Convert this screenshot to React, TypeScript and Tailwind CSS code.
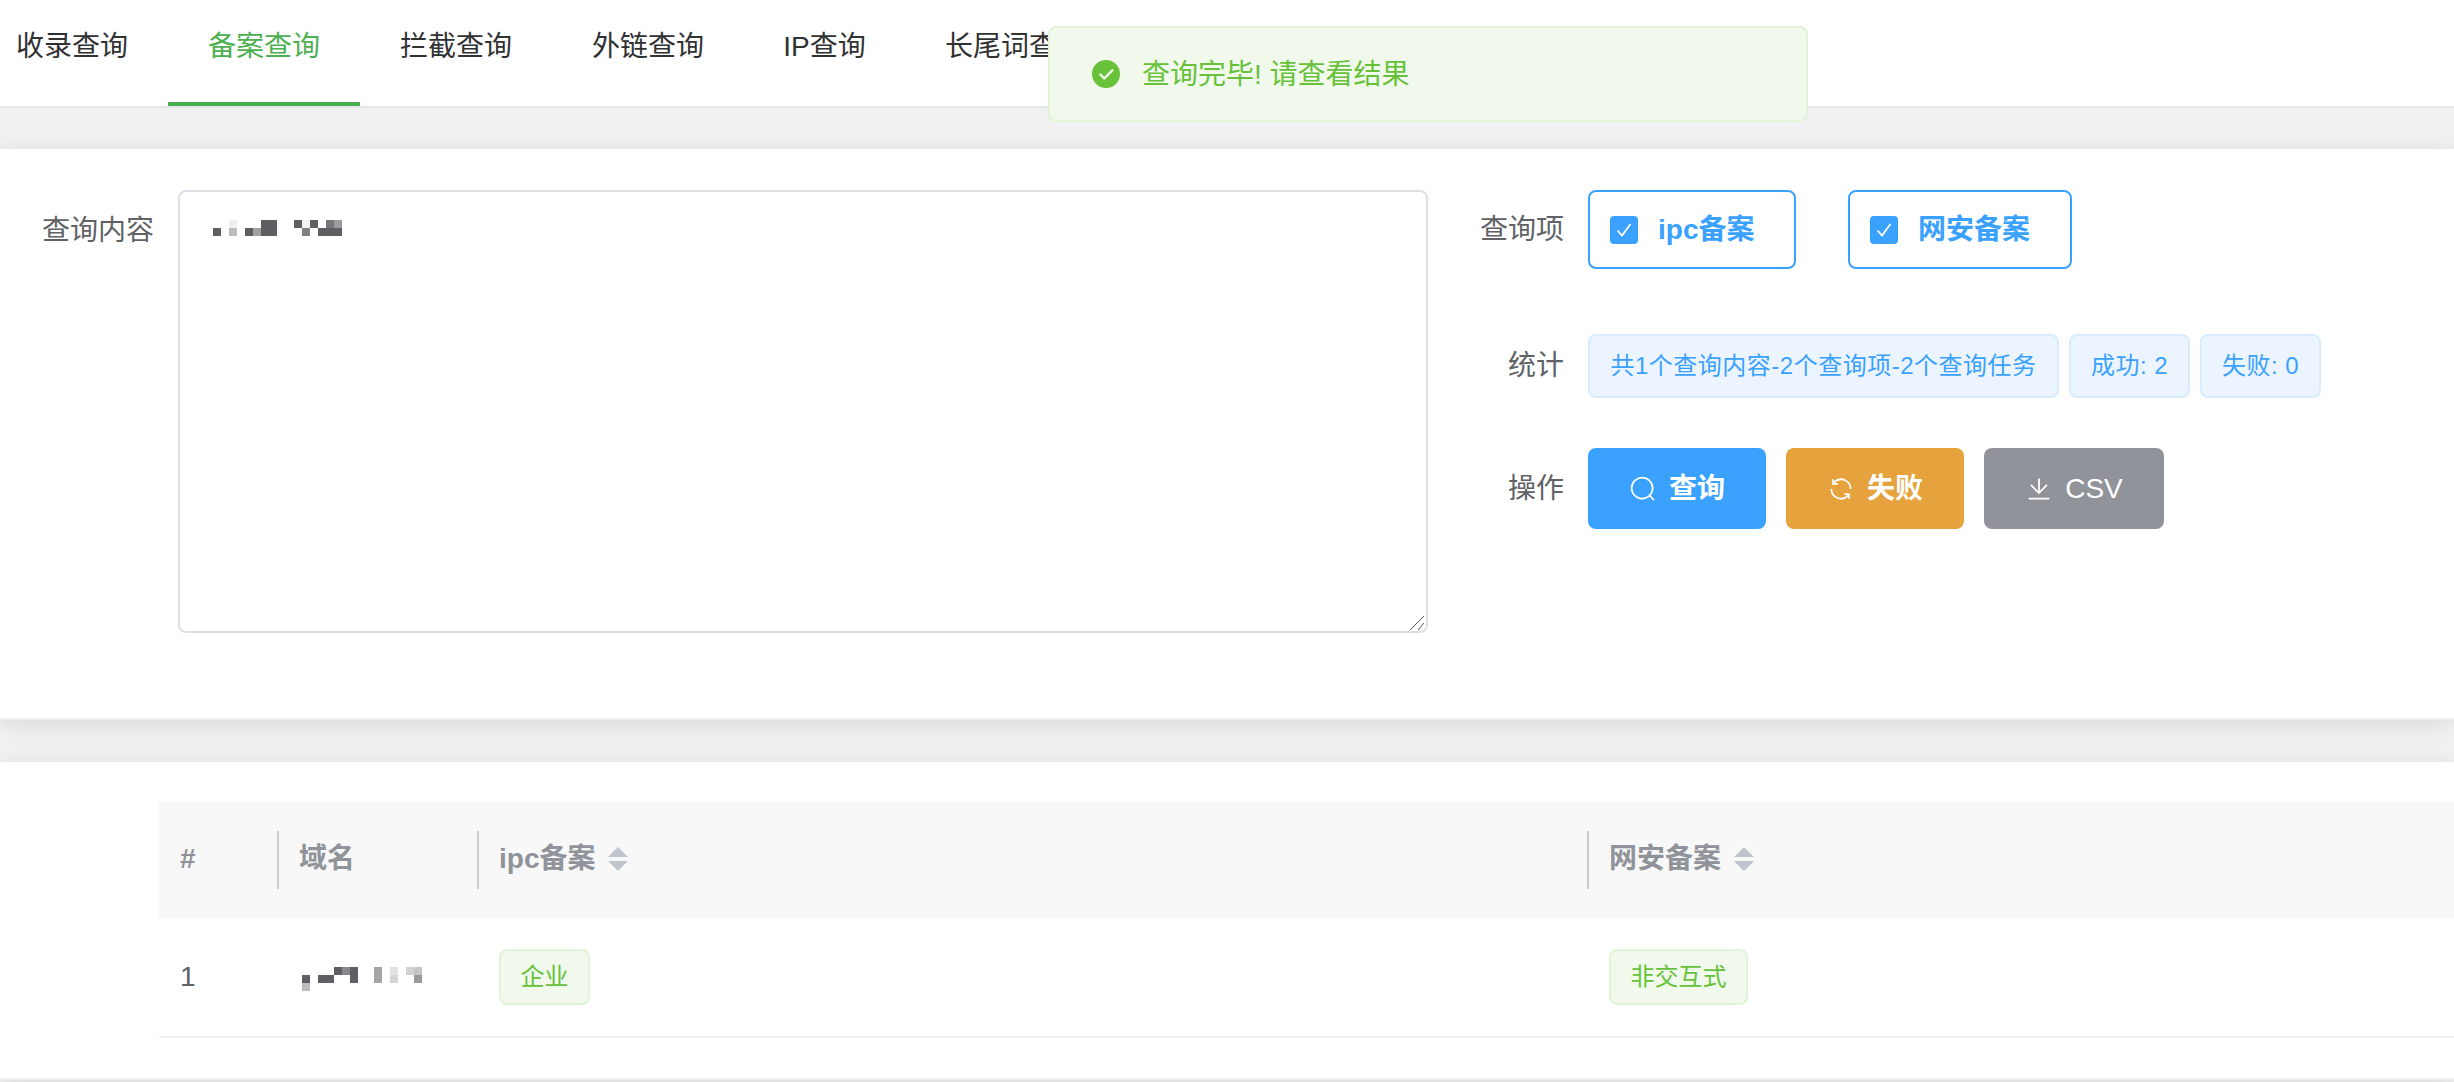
import { useState } from 'react';

const font = { fontFamily: '"Liberation Sans", "Noto Sans CJK SC", sans-serif' };

const tabs = [
  { label: '收录查询', width: 'w-[192px]' },
  { label: '备案查询', width: 'w-[192px]', active: true },
  { label: '拦截查询', width: 'w-[192px]' },
  { label: '外链查询', width: 'w-[192px]' },
  { label: 'IP查询', width: 'w-[161px]' },
  { label: '长尾词查询', width: 'w-[220px]' },
];

// blurred-out text in the reference
const queryMosaic: [number, number, number, number, string][] = [
  [0, 8, 8, 8, '#5f5f63'],
  [16, 0, 8, 8, '#f0f0f0'],
  [16, 8, 8, 8, '#bdbdbd'],
  [32, 8, 8, 8, '#5f5f63'],
  [40, 8, 8, 8, '#a0a0a0'],
  [48, 0, 16, 16, '#5f5f63'],
  [81, 0, 8, 8, '#5f5f63'],
  [89, 0, 8, 8, '#f2f2f2'],
  [89, 8, 8, 8, '#808083'],
  [97, 0, 8, 8, '#5f5f63'],
  [105, 8, 24, 8, '#5f5f63'],
  [113, 0, 8, 8, '#77777a'],
  [121, 0, 8, 8, '#9b9b9d'],
];

const domainMosaic: [number, number, number, number, string][] = [
  [0, 8, 8, 8, '#5f5f63'],
  [0, 16, 8, 8, '#bbbbbb'],
  [16, 8, 16, 8, '#5f5f63'],
  [32, 0, 8, 8, '#5f5f63'],
  [40, 0, 8, 8, '#88888b'],
  [48, 0, 8, 16, '#5f5f63'],
  [72, 0, 8, 16, '#a5a5a7'],
  [88, 0, 8, 8, '#e3e3e3'],
  [88, 8, 8, 8, '#d5d5d5'],
  [104, 0, 8, 8, '#d2d2d2'],
  [112, 0, 8, 8, '#c5c5c7'],
  [112, 8, 8, 8, '#9a9a9c'],
];

function Mosaic({ cells, w, h }: { cells: typeof queryMosaic; w: number; h: number }) {
  return (
    <svg width={w} height={h} viewBox={`0 0 ${w} ${h}`} className="block">
      {cells.map(([x, y, cw, ch, fill], i) => (
        <rect key={i} x={x} y={y} width={cw} height={ch} fill={fill} />
      ))}
    </svg>
  );
}

function SearchIcon() {
  return (
    <svg viewBox="0 0 1024 1024" className="w-[28px] h-[28px]" fill="currentColor">
      <path d="m795.904 750.72 124.992 124.928a32 32 0 0 1-45.248 45.248L750.656 795.904a416 416 0 1 1 45.248-45.248zM480 832a352 352 0 1 0 0-704 352 352 0 0 0 0 704" />
    </svg>
  );
}

function RefreshIcon() {
  return (
    <svg viewBox="0 0 1024 1024" className="w-[28px] h-[28px]" fill="currentColor">
      <path d="M771.776 794.88A384 384 0 0 1 128 512h64a320 320 0 0 0 555.712 216.448H654.72a32 32 0 1 1 0-64h149.056a32 32 0 0 1 32 32v148.928a32 32 0 1 1-64 0v-50.56zM276.288 295.616h92.992a32 32 0 0 1 0 64H220.16a32 32 0 0 1-32-32V178.56a32 32 0 0 1 64 0v50.56A384 384 0 0 1 896.128 512h-64a320 320 0 0 0-555.776-216.384z" />
    </svg>
  );
}

function DownloadIcon() {
  return (
    <svg viewBox="0 0 1024 1024" className="w-[28px] h-[28px]" fill="currentColor">
      <path d="M160 832h704a32 32 0 1 1 0 64H160a32 32 0 1 1 0-64m384-253.696 236.288-236.352 45.248 45.248L508.8 704 192 387.2l45.248-45.248L480 584.704V128h64z" />
    </svg>
  );
}

function SuccessIcon() {
  return (
    <svg viewBox="0 0 896 896" className="w-[28px] h-[28px]" fill="#67c23a">
      <path transform="translate(-64 -64)" d="M512 64a448 448 0 1 1 0 896 448 448 0 0 1 0-896m-55.808 536.384-99.52-99.584a38.4 38.4 0 1 0-54.336 54.336l126.72 126.72a38.272 38.272 0 0 0 54.336 0l262.4-262.464a38.4 38.4 0 1 0-54.272-54.336z" />
    </svg>
  );
}

function SortCaret() {
  return (
    <svg width="20" height="24" viewBox="0 0 20 24" className="ml-[13px]" fill="#c0c4cc">
      <path d="M10 0 20 10H0z" />
      <path d="M0 14H20L10 24z" />
    </svg>
  );
}

function CheckItem({ label, width }: { label: string; width: string }) {
  return (
    <label className={`${width} h-[79px] flex items-center pl-[20px] border-2 border-[#3aa1ff] rounded-[8px]`}>
      <span className="w-[28px] h-[28px] rounded-[4px] bg-[#3aa1ff]">
        <svg width="28" height="28" viewBox="0 0 28 28" fill="none" stroke="white" strokeWidth="1.8">
          <path d="M7.5 14.5 12 19.5 20.5 8" />
        </svg>
      </span>
      <span className="ml-[20px] text-[28px] leading-[28px] font-bold text-[#3aa1ff]">{label}</span>
    </label>
  );
}

function StatTag({ children, width }: { children: string; width: string }) {
  return (
    <span className={`${width} h-[64px] flex items-center justify-center bg-[#ecf5ff] border-2 border-[#d9ecff] rounded-[8px] text-[24px] tracking-[0.5px] text-[#3aa1ff] whitespace-nowrap`}>
      {children}
    </span>
  );
}

function ResultTag({ children, width }: { children: string; width: string }) {
  return (
    <span className={`${width} h-[56px] flex items-center justify-center bg-[#f0f9eb] border-2 border-[#e1f3d8] rounded-[8px] text-[24px] text-[#67c23a]`}>
      {children}
    </span>
  );
}

function ActionButton({ icon, label, bg, width, bold }: { icon: React.ReactNode; label: string; bg: string; width: string; bold?: boolean }) {
  return (
    <button className={`${bg} ${width} h-[81px] rounded-[8px] flex items-center justify-center gap-[12px] text-white text-[28px] ${bold ? 'font-bold' : ''}`}>
      {icon}
      {label}
    </button>
  );
}

function HeaderCell({ children, divider }: { children: React.ReactNode; divider?: boolean }) {
  return (
    <div className={`flex items-center h-[58px] self-center pb-[3px] text-[28px] font-bold text-[#909399] ${divider ? 'border-l-2 border-[#cccccc] pl-[20px]' : 'pl-[21px]'}`}>
      {children}
    </div>
  );
}

export default function App() {
  const [query, setQuery] = useState('');

  return (
    <div className="relative h-[1082px] overflow-hidden bg-[#f1f1f2]" style={font}>
      {/* tabs */}
      <div className="h-[108px] bg-white border-b-2 border-[#e4e7ed] flex overflow-hidden">
        <div className="flex -ml-[24px]">
          {tabs.map(tab => (
            <div
              key={tab.label}
              className={`${tab.width} h-[106px] pt-[27px] text-center text-[28px] leading-[40px] whitespace-nowrap ${tab.active ? 'text-[#4caf50] border-b-4 border-[#4caf50]' : 'text-[#303133]'}`}
            >
              {tab.label}
            </div>
          ))}
        </div>
      </div>

      {/* toast */}
      <div className="absolute left-[1048px] top-[26px] w-[760px] h-[96px] flex items-center pl-[42px] gap-[22px] bg-[#f0f9eb] border-2 border-[#e1f3d8] rounded-[8px] text-[28px] text-[#67c23a]">
        <SuccessIcon />
        <span className="pt-[2px]">查询完毕! 请查看结果</span>
      </div>

      {/* query form */}
      <div className="mt-[41px] h-[571px] bg-white border-b-2 border-[#ebeef5] shadow-[0_4px_24px_rgba(0,0,0,0.1)] pt-[41px] flex">
        <div className="w-[154px] text-right text-[28px] leading-[28px] text-[#606266] pt-[27px]">查询内容</div>
        <div className="relative ml-[24px] w-[1250px] h-[443px]">
          <textarea
            value={query}
            onChange={e => setQuery(e.target.value)}
            className="block w-full h-full border-2 border-[#dcdfe6] rounded-[8px] resize-none outline-none"
          />
          <div className="absolute left-[35px] top-[30px]">
            <Mosaic cells={queryMosaic} w={129} h={16} />
          </div>
          {/* resize handle */}
          <svg width="16" height="16" viewBox="0 0 16 16" className="absolute right-[3px] bottom-[2px]" fill="none" stroke="#555555" strokeWidth="1">
            <path d="M1 15 15 1M9 15 15 8" />
          </svg>
        </div>
        <div className="flex flex-col">
          <div className="flex items-center h-[79px]">
            <div className="w-[136px] text-right text-[28px] text-[#606266]">查询项</div>
            <div className="ml-[24px] flex gap-[52px]">
              <CheckItem label="ipc备案" width="w-[208px]" />
              <CheckItem label="网安备案" width="w-[224px]" />
            </div>
          </div>
          <div className="flex items-center h-[64px] mt-[65px]">
            <div className="w-[136px] text-right text-[28px] text-[#606266]">统计</div>
            <div className="ml-[24px] flex gap-[10px]">
              <StatTag width="w-[471px]">共1个查询内容-2个查询项-2个查询任务</StatTag>
              <StatTag width="w-[121px]">成功: 2</StatTag>
              <StatTag width="w-[121px]">失败: 0</StatTag>
            </div>
          </div>
          <div className="flex items-center h-[81px] mt-[50px]">
            <div className="w-[136px] text-right text-[28px] text-[#606266]">操作</div>
            <div className="ml-[24px] flex gap-[20px]">
              <ActionButton icon={<SearchIcon />} label="查询" bg="bg-[#3aa1ff]" width="w-[178px]" bold />
              <ActionButton icon={<RefreshIcon />} label="失败" bg="bg-[#e6a23c]" width="w-[178px]" bold />
              <ActionButton icon={<DownloadIcon />} label="CSV" bg="bg-[#909399]" width="w-[180px]" />
            </div>
          </div>
        </div>
      </div>

      {/* results */}
      <div className="mt-[42px] h-[318px] bg-white border-b-2 border-[#ebeef5] shadow-[0_4px_24px_rgba(0,0,0,0.1)] pt-[40px] pl-[159px]">
        <div className="grid grid-cols-[118px_200px_1110px_1fr] h-[116px] bg-[#f8f8f8]">
          <HeaderCell>#</HeaderCell>
          <HeaderCell divider>域名</HeaderCell>
          <HeaderCell divider>
            ipc备案
            <SortCaret />
          </HeaderCell>
          <HeaderCell divider>
            网安备案
            <SortCaret />
          </HeaderCell>
        </div>
        <div className="grid grid-cols-[118px_200px_1110px_1fr] h-[120px] items-center border-b-2 border-[#ebeef5] text-[28px] text-[#606266]">
          <div className="pl-[21px]">1</div>
          <div className="pl-[25px] pt-[4px]">
            <Mosaic cells={domainMosaic} w={120} h={24} />
          </div>
          <div className="pl-[22px]">
            <ResultTag width="w-[91px]">企业</ResultTag>
          </div>
          <div className="pl-[22px]">
            <ResultTag width="w-[139px]">非交互式</ResultTag>
          </div>
        </div>
      </div>
    </div>
  );
}
